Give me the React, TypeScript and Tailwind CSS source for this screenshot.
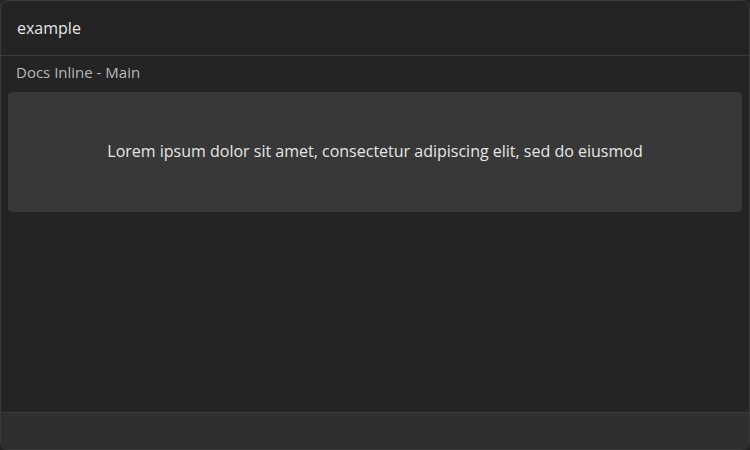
export default function App() {
    return (
        <div className="h-[450px] w-[750px] bg-[#242424] font-['Open_Sans',sans-serif]">
            <div className="flex h-full flex-col overflow-hidden rounded-lg border border-[#3a3a3a] bg-[#242424]">
                <div className="flex h-[55px] shrink-0 items-center border-b border-[#3a3a3a] px-4 text-base text-[#e6e6e6]">
                    example
                </div>
                <div className="flex flex-1 flex-col px-[7px] pt-[5px]">
                    <div className="px-2 text-[15px] leading-[22px] text-[#b8b8b8]">Docs Inline - Main</div>
                    <div className="mt-[9px] flex h-[120px] items-center justify-center rounded bg-[#383838] pb-[2px] text-base text-[#e6e6e6]">
                        Lorem ipsum dolor sit amet, consectetur adipiscing elit, sed do eiusmod
                    </div>
                </div>
                <div className="h-[37px] shrink-0 border-t border-[#3a3a3a] bg-[#2f2f2f]" />
            </div>
        </div>
    );
}
